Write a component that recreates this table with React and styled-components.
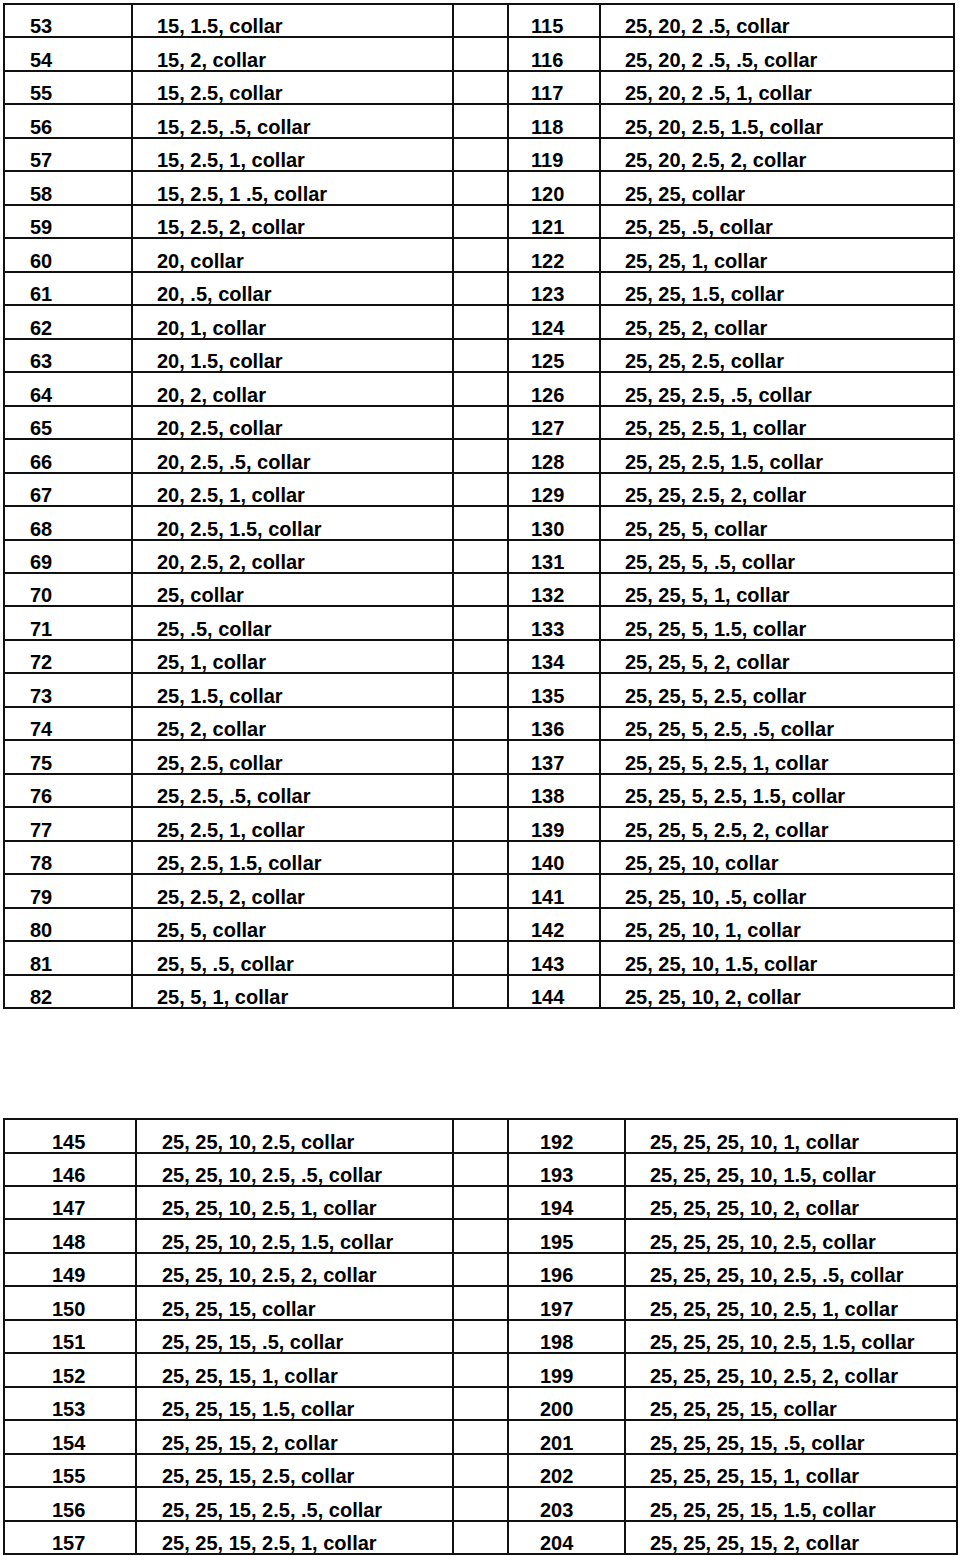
import React from "react";
import styled, { createGlobalStyle } from "styled-components";

const GlobalStyle = createGlobalStyle`
  html, body {
    margin: 0;
    padding: 0;
    background: #fff;
  }
  body {
    font-family: "Liberation Sans", Arial, sans-serif;
    color: #000;
  }
`;

const Page = styled.div`
  width: 960px;
  padding: 3px 0 0 3px;
  box-sizing: border-box;
`;

const Grid = styled.div`
  display: grid;
  grid-template-columns: ${(p) => p.$cols};
  grid-auto-rows: 33.48px;
  width: max-content;
  border-top: 2px solid #111;
  border-left: 2px solid #111;
  margin-bottom: ${(p) => p.$gap || 0}px;
`;

const Cell = styled.div`
  display: flex;
  align-items: flex-end;
  box-sizing: border-box;
  border-right: 2px solid #111;
  border-bottom: 2px solid #111;
  padding-left: ${(p) => p.$pad}px;
  font-size: 20px;
  font-weight: 700;
  line-height: 20px;
  white-space: nowrap;
  overflow: hidden;
`;

const firstLeft = [
  "15, 1.5, collar", "15, 2, collar", "15, 2.5, collar", "15, 2.5, .5, collar",
  "15, 2.5, 1, collar", "15, 2.5, 1 .5, collar", "15, 2.5, 2, collar", "20, collar",
  "20, .5, collar", "20, 1, collar", "20, 1.5, collar", "20, 2, collar",
  "20, 2.5, collar", "20, 2.5, .5, collar", "20, 2.5, 1, collar", "20, 2.5, 1.5, collar",
  "20, 2.5, 2, collar", "25, collar", "25, .5, collar", "25, 1, collar",
  "25, 1.5, collar", "25, 2, collar", "25, 2.5, collar", "25, 2.5, .5, collar",
  "25, 2.5, 1, collar", "25, 2.5, 1.5, collar", "25, 2.5, 2, collar", "25, 5, collar",
  "25, 5, .5, collar", "25, 5, 1, collar",
];

const firstRight = [
  "25, 20, 2 .5, collar", "25, 20, 2 .5, .5, collar", "25, 20, 2 .5, 1, collar",
  "25, 20, 2.5, 1.5, collar", "25, 20, 2.5, 2, collar", "25, 25, collar",
  "25, 25, .5, collar", "25, 25, 1, collar", "25, 25, 1.5, collar", "25, 25, 2, collar",
  "25, 25, 2.5, collar", "25, 25, 2.5, .5, collar", "25, 25, 2.5, 1, collar",
  "25, 25, 2.5, 1.5, collar", "25, 25, 2.5, 2, collar", "25, 25, 5, collar",
  "25, 25, 5, .5, collar", "25, 25, 5, 1, collar", "25, 25, 5, 1.5, collar",
  "25, 25, 5, 2, collar", "25, 25, 5, 2.5, collar", "25, 25, 5, 2.5, .5, collar",
  "25, 25, 5, 2.5, 1, collar", "25, 25, 5, 2.5, 1.5, collar", "25, 25, 5, 2.5, 2, collar",
  "25, 25, 10, collar", "25, 25, 10, .5, collar", "25, 25, 10, 1, collar",
  "25, 25, 10, 1.5, collar", "25, 25, 10, 2, collar",
];

const secondLeft = [
  "25, 25, 10, 2.5, collar", "25, 25, 10, 2.5, .5, collar", "25, 25, 10, 2.5, 1, collar",
  "25, 25, 10, 2.5, 1.5, collar", "25, 25, 10, 2.5, 2, collar", "25, 25, 15, collar",
  "25, 25, 15, .5, collar", "25, 25, 15, 1, collar", "25, 25, 15, 1.5, collar",
  "25, 25, 15, 2, collar", "25, 25, 15, 2.5, collar", "25, 25, 15, 2.5, .5, collar",
  "25, 25, 15, 2.5, 1, collar",
];

const secondRight = [
  "25, 25, 25, 10, 1, collar", "25, 25, 25, 10, 1.5, collar", "25, 25, 25, 10, 2, collar",
  "25, 25, 25, 10, 2.5, collar", "25, 25, 25, 10, 2.5, .5, collar",
  "25, 25, 25, 10, 2.5, 1, collar", "25, 25, 25, 10, 2.5, 1.5, collar",
  "25, 25, 25, 10, 2.5, 2, collar", "25, 25, 25, 15, collar", "25, 25, 25, 15, .5, collar",
  "25, 25, 25, 15, 1, collar", "25, 25, 25, 15, 1.5, collar", "25, 25, 25, 15, 2, collar",
];

function SizeTable({ cols, pads, leftStart, left, rightStart, right, gap }) {
  return (
    <Grid $cols={cols} $gap={gap}>
      {left.map((text, i) => (
        <React.Fragment key={i}>
          <Cell $pad={pads[0]}>{leftStart + i}</Cell>
          <Cell $pad={pads[1]}>{text}</Cell>
          <Cell $pad={0} />
          <Cell $pad={pads[2]}>{rightStart + i}</Cell>
          <Cell $pad={pads[3]}>{right[i]}</Cell>
        </React.Fragment>
      ))}
    </Grid>
  );
}

export default function App() {
  return (
    <Page>
      <GlobalStyle />
      <SizeTable
        cols="128px 321px 55px 92px 354px"
        pads={[25, 24, 22, 24]}
        leftStart={53}
        left={firstLeft}
        rightStart={115}
        right={firstRight}
        gap={109}
      />
      <SizeTable
        cols="132px 317px 55px 117px 332px"
        pads={[47, 25, 31, 24]}
        leftStart={145}
        left={secondLeft}
        rightStart={192}
        right={secondRight}
      />
    </Page>
  );
}
